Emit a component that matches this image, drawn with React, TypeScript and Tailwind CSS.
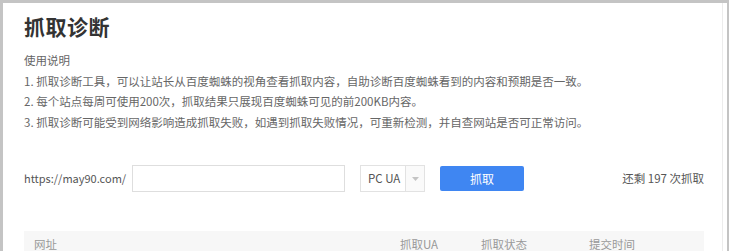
import React from "react";

export default function App() {
  const font = { fontFamily: '"Noto Sans CJK SC", "Microsoft YaHei", sans-serif' };
  return (
    <div
      className="w-[729px] h-[251px] overflow-hidden bg-white border-t-[3px] border-l-[3px] border-r-[2px] border-[#c4c4c4]"
      style={font}
    >
      <div className="h-full mr-[4px] border-r border-[#ececec] pl-[21px] pr-[18px] pt-[8px]">
        <h1 className="text-[21px] leading-[30px] font-bold text-[#333] tracking-[0.5px]">抓取诊断</h1>
        <div className="mt-[9px] text-[11.5px] leading-[20.5px] text-[#666]">
          <p>使用说明</p>
          <p>1. 抓取诊断工具，可以让站长从百度蜘蛛的视角查看抓取内容，自助诊断百度蜘蛛看到的内容和预期是否一致。</p>
          <p>2. 每个站点每周可使用200次，抓取结果只展现百度蜘蛛可见的前200KB内容。</p>
          <p>3. 抓取诊断可能受到网络影响造成抓取失败，如遇到抓取失败情况，可重新检测，并自查网站是否可正常访问。</p>
        </div>
        <div className="mt-[33px] flex items-center h-[27px] text-[11.5px]">
          <span className="text-[#555] text-[11px] w-[108px] whitespace-nowrap">https://may90.com/</span>
          <div className="w-[213px] h-[27px] border border-[#dedede] bg-white" />
          <div className="ml-[15px] flex h-[27px] w-[65px] border border-[#e2e2e2]">
            <div className="w-[45px] flex items-center pl-[7px] text-[#555] border-r border-[#e2e2e2]">PC UA</div>
            <div className="flex-1 flex items-center justify-center bg-[#fafafa]">
              <svg width="7" height="4" viewBox="0 0 7 4">
                <path d="M0 0 L7 0 L3.5 4 Z" fill="#c4c4c4" />
              </svg>
            </div>
          </div>
          <button className="ml-[15px] w-[84px] h-[25px] rounded-[2px] bg-[#3f86f2] text-white text-[12px] leading-[25px]">
            抓取
          </button>
          <div className="flex-1" />
          <span className="text-[#555]">还剩 197 次抓取</span>
        </div>
        <div className="mt-[39px] h-[40px] bg-[#f7f7f7] flex pt-[7px] text-[11.5px] leading-[12px] text-[#999]">
          <div className="w-[376px] pl-[10px]">网址</div>
          <div className="w-[81px]">抓取UA</div>
          <div className="w-[108px]">抓取状态</div>
          <div className="flex-1">提交时间</div>
        </div>
      </div>
    </div>
  );
}
